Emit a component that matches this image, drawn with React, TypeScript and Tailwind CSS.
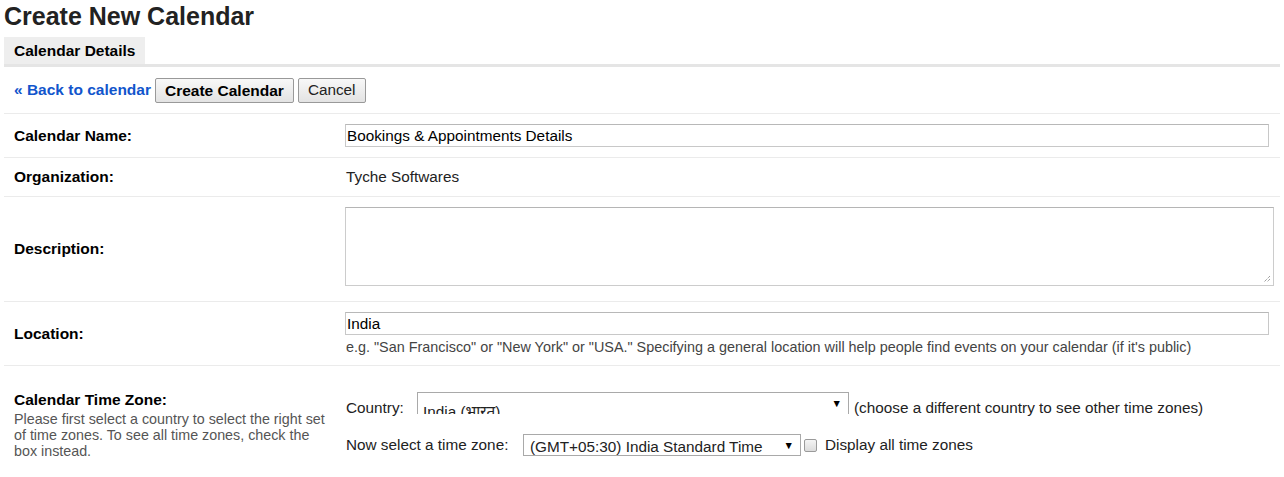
const font = { fontFamily: '"Liberation Sans", Arial, "Noto Sans", sans-serif' }

const Row = ({
  label,
  children,
  className = "",
}: {
  label: string
  children: React.ReactNode
  className?: string
}) => (
  <div className={`flex border-b border-[#ebebeb] ${className}`}>
    <div className="w-[341px] shrink-0 pl-[10px] flex items-center self-stretch">
      <span className="text-[15.5px] font-bold text-black">{label}</span>
    </div>
    <div className="flex-1 pr-[11px]">{children}</div>
  </div>
)

const Arrow = () => <span className="absolute right-[6px] top-[3px] text-[10.5px] leading-[14px] text-black">▼</span>

export default function App() {
  return (
    <div className="bg-white min-h-[477px] px-1 text-[#222]" style={font}>
      <h1 className="text-[25px] font-bold leading-[30px] h-[37px] pt-[1px] text-[#222]">Create New Calendar</h1>

      {/* tab strip */}
      <div className="border-b-[3px] border-[#e5e5e5]">
        <div className="inline-block bg-[#eeeeee] h-[27px] px-[10px] text-[15.5px] font-bold leading-[27px] text-black">
          Calendar Details
        </div>
      </div>

      {/* actions */}
      <div className="flex items-center h-[47px] pl-[10px] border-b border-[#ebebeb]">
        <a href="#" className="text-[15.5px] font-bold text-[#1155cc] mr-[4px]">
          « Back to calendar
        </a>
        <button className="h-[25px] px-[9px] text-[15.5px] font-bold text-black border border-[#999] rounded-[2px] bg-gradient-to-b from-[#f8f8f8] to-[#e3e3e3] mr-[4px]">
          Create Calendar
        </button>
        <button className="h-[25px] px-[9px] text-[15.3px] text-[#222] border border-[#999] rounded-[2px] bg-gradient-to-b from-[#f8f8f8] to-[#e3e3e3]">
          Cancel
        </button>
      </div>

      <Row label="Calendar Name:" className="h-[44px] items-center">
        <div className="h-[23px] w-[924px] border border-[#c8c8c8] border-t-[#b8b8b8] text-[15.3px] leading-[21px] pl-[1px] text-black">
          Bookings &amp; Appointments Details
        </div>
      </Row>

      <Row label="Organization:" className="h-[39px] items-center">
        <div className="text-[15.3px] pl-[1px] text-[#222]">Tyche Softwares</div>
      </Row>

      <Row label="Description:" className="h-[105px] items-start">
        <div className="pt-[10px]">
          <div className="relative h-[79px] w-[929px] border border-[#cccccc] border-t-[#b5b5b5]">
            <svg className="absolute right-[2px] bottom-[2px]" width="8" height="8" viewBox="0 0 8 8">
              <path d="M7 1 L1 7 M7 4 L4 7" stroke="#777" strokeWidth="1" strokeDasharray="1 1" />
            </svg>
          </div>
        </div>
      </Row>

      <Row label="Location:" className="h-[64px] items-start">
        <div className="pt-[10px]">
          <div className="h-[23px] w-[924px] border border-[#c8c8c8] border-t-[#b8b8b8] text-[15.3px] leading-[21px] pl-[1px] text-black">
            India
          </div>
          <div className="text-[14.4px] leading-[18px] mt-[3px] pl-[1px] text-[#444] whitespace-nowrap">
            e.g. "San Francisco" or "New York" or "USA." Specifying a general location will help people find events on
            your calendar (if it's public)
          </div>
        </div>
      </Row>

      <div className="flex">
        <div className="w-[341px] shrink-0 pl-[10px] pr-[12px] pt-[24px]">
          <div className="text-[15.5px] font-bold text-black leading-[20px]">Calendar Time Zone:</div>
          <div className="text-[14.3px] leading-[16px] text-[#555] mt-[1px]">
            Please first select a country to select the right set of time zones. To see all time zones, check the
            box instead.
          </div>
        </div>
        <div className="flex-1 pt-[26px]">
          <div className="flex items-start h-[22px] text-[15.3px] text-[#222]">
            <span className="w-[72px] pl-[1px] mt-[5px]">Country:</span>
            <div className="relative h-[22px] w-[432px] border border-[#a9a9a9] border-b-0 bg-white overflow-hidden">
              <span
                className="absolute left-[5px] top-[8px] whitespace-nowrap text-[15.3px]"
                style={{ fontFamily: '"Liberation Sans", "Noto Sans", "Noto Sans Devanagari", sans-serif' }}
              >
                India (भारत)
              </span>
              <Arrow />
            </div>
            <span className="ml-[5px] mt-[5px]">(choose a different country to see other time zones)</span>
          </div>
          <div className="flex items-center h-[22px] mt-[20px] text-[15.3px] text-[#222]">
            <span className="w-[178px] pl-[1px]">Now select a time zone:</span>
            <div className="relative h-[22px] w-[278px] border border-[#a9a9a9] bg-white">
              <span className="absolute left-[6px] top-[1px] whitespace-nowrap">(GMT+05:30) India Standard Time</span>
              <Arrow />
            </div>
            <div className="ml-[3px] h-[13px] w-[13px] rounded-[2px] border border-[#9a9a9a] bg-gradient-to-b from-[#f4f4f4] to-[#dcdcdc]" />
            <span className="ml-[8px]">Display all time zones</span>
          </div>
        </div>
      </div>
    </div>
  )
}
